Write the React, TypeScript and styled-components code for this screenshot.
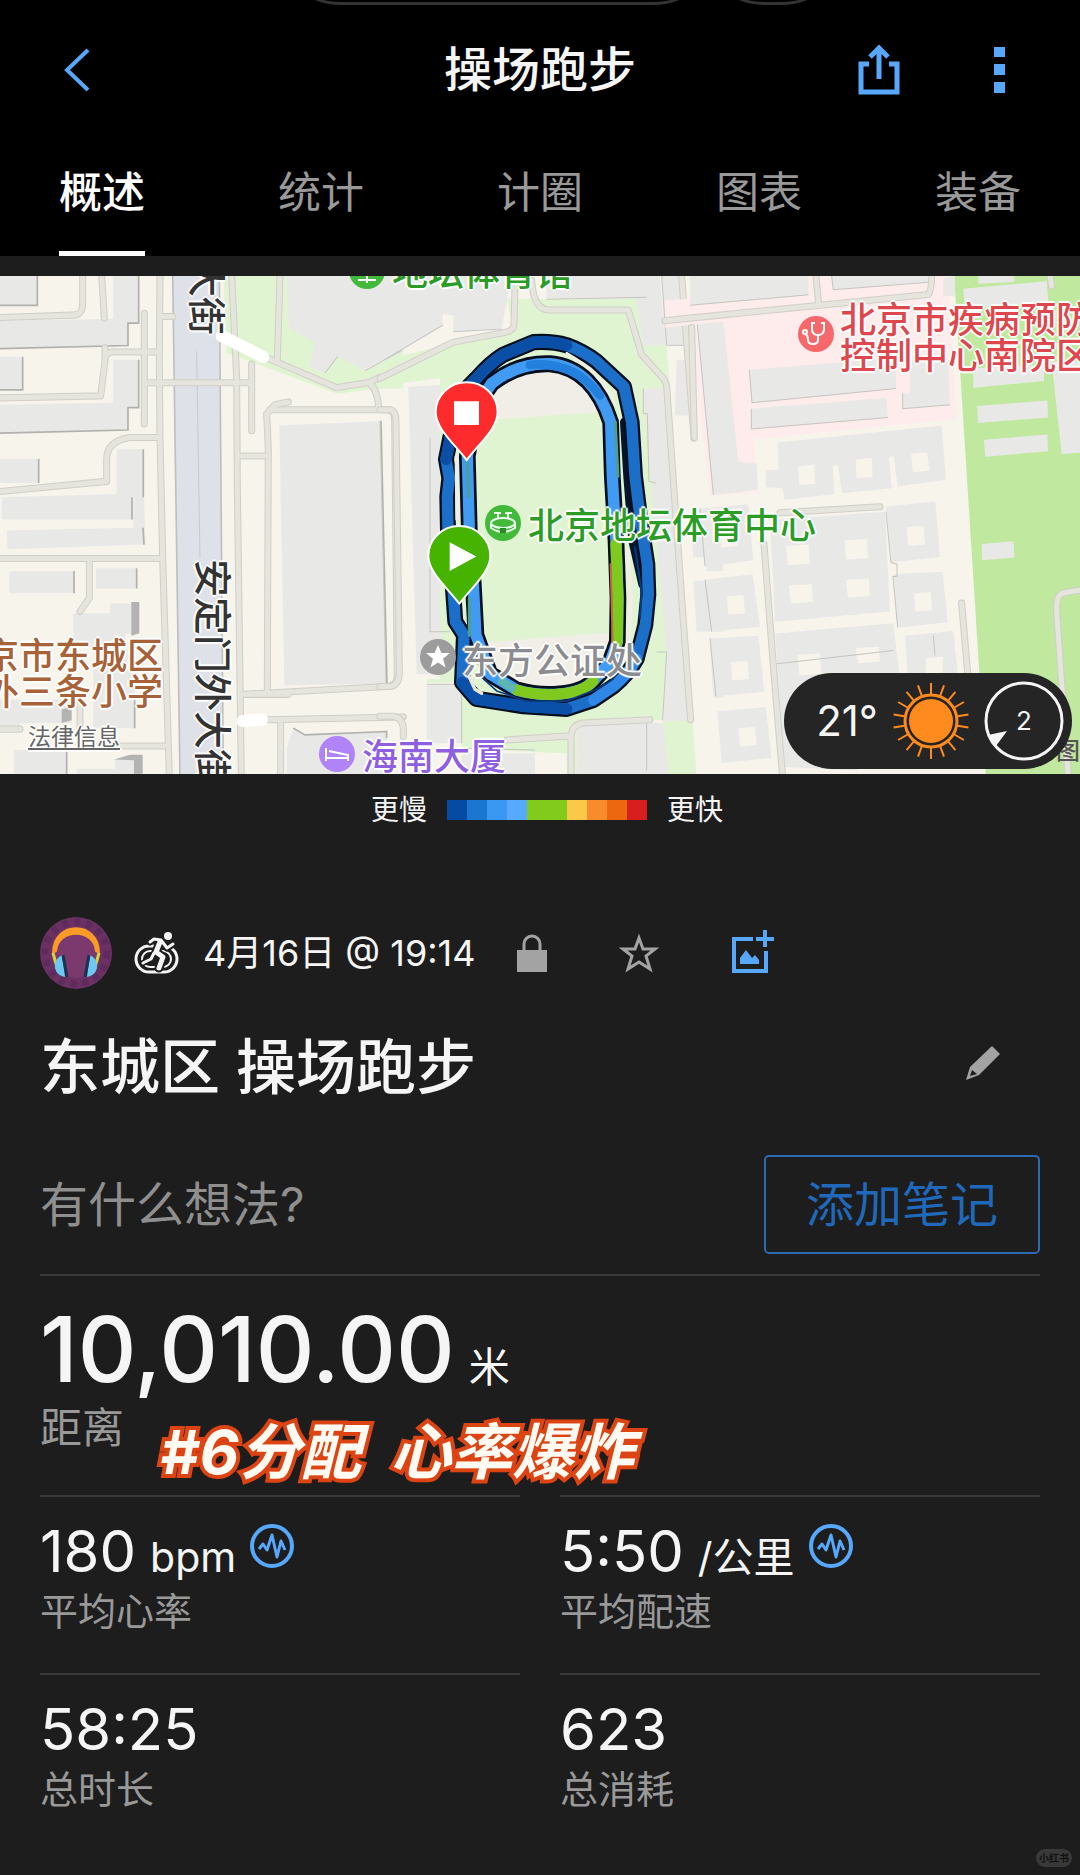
import React from "react";
import styled, { createGlobalStyle, css } from "styled-components";

const GlobalStyle = createGlobalStyle`
  *, *::before, *::after { box-sizing: border-box; }
  body {
    margin: 0;
    background: #1d1d1d;
    color: #f5f5f5;
    font-family: Inter, "Noto Sans CJK SC", sans-serif;
  }
  button { font: inherit; color: inherit; background: none; border: 0; padding: 0; cursor: pointer; }
  p, h1, h2, dl, dt, dd { margin: 0; font-weight: 400; }
  svg { display: block; }
`;

const blue = "#57a7fb";
const grey = "#a3a3a3";

/* ---------- page ---------- */

const Page = styled.div`
  position: relative;
  min-height: 100vh;
  overflow: hidden;
`;

const TopBar = styled.header`
  position: relative;
  background: #000;
`;

const StatusShapes = styled.div`
  position: absolute;
  top: 0;
  left: 0;
  right: 0;
  display: flex;
  justify-content: center;
  gap: 40px;
  padding-left: 42px;
  height: 6px;
  overflow: hidden;
`;

const StatusShape = styled.span<{ $width: number }>`
  width: ${(p) => p.$width}px;
  height: 72px;
  margin-top: -67px;
  border: 3px solid #333;
  border-radius: 36px / 16px;
`;

const NavRow = styled.div`
  display: grid;
  grid-template-columns: 1fr auto 1fr;
  align-items: center;
  height: 140px;
  padding: 0 60px;
`;

const PageTitle = styled.h1`
  font-size: 48px;
  line-height: 60px;
  font-weight: 500;
`;

const NavActions = styled.div`
  display: flex;
  justify-content: flex-end;
  gap: 94px;
`;

const IconButton = styled.button`
  display: grid;
  place-items: center;
  flex: none;
`;

const BackButton = styled(IconButton)`
  justify-self: start;
`;

const Tabs = styled.nav`
  display: flex;
  justify-content: space-between;
  padding: 0 59px;
`;

const Tab = styled.button<{ $active?: boolean }>`
  height: 116px;
  padding-bottom: 7px;
  border-bottom: 5px solid ${(p) => (p.$active ? "#fff" : "transparent")};
  color: ${(p) => (p.$active ? "#fff" : "#999")};
  font-size: 43px;
  line-height: 56px;
  font-weight: ${(p) => (p.$active ? 500 : 400)};
`;

/* ---------- map ---------- */

const MapPanel = styled.section`
  position: relative;
  height: 498px;
  margin-top: 20px;
  overflow: hidden;
  background: #f7f4ec;
`;

const MapDrawing = styled.svg`
  width: 100%;
  height: 100%;
`;

const PinLayer = styled(MapDrawing)`
  position: absolute;
  inset: 0;
`;

type Spot = { $x: number; $y: number };

const spot = css<Spot>`
  position: absolute;
  left: calc(50% + ${(p) => p.$x - 540}px);
  top: ${(p) => p.$y}px;
`;

const halo = css`
  text-shadow: 0 0 2px #fff, 2px 0 1px #fff, -2px 0 1px #fff, 0 2px 1px #fff, 0 -2px 1px #fff;
`;

const MapLabel = styled.span<Spot & { $color: string }>`
  ${spot}
  ${halo}
  color: ${(p) => p.$color};
  font-size: 36px;
  line-height: 36px;
  font-weight: 500;
  white-space: pre;
`;

const StreetLabel = styled.span<Spot>`
  ${spot}
  ${halo}
  color: #333;
  font-size: 38px;
  line-height: 38px;
  font-weight: 500;
  writing-mode: vertical-rl;
  text-orientation: sideways;
  white-space: nowrap;
`;

const LegalLink = styled.a<Spot>`
  ${spot}
  ${halo}
  color: #666;
  font-size: 23px;
  line-height: 28px;
  text-underline-offset: 3px;
`;

const Attribution = styled.span<Spot>`
  ${spot}
  color: #555;
  font-size: 24px;
  line-height: 28px;
  font-weight: 500;
  white-space: nowrap;
`;

const Weather = styled.div`
  position: absolute;
  right: 8px;
  bottom: 5px;
  display: flex;
  align-items: center;
  justify-content: flex-end;
  gap: 14px;
  width: 288px;
  height: 96px;
  padding-right: 8px;
  border-radius: 48px;
  background: #252525;
`;

const Temperature = styled.span`
  font-size: 42px;
  line-height: 48px;
`;

const Wind = styled.span`
  position: relative;
  display: grid;
  place-items: center;
  width: 80px;
  height: 80px;
  font-size: 26px;
  line-height: 32px;
`;

const WindDial = styled.svg`
  position: absolute;
  inset: 0;
`;

const Legend = styled.div`
  display: flex;
  align-items: center;
  justify-content: center;
  gap: 20px;
  height: 72px;
  padding-left: 14px;
  font-size: 28px;
  line-height: 36px;
`;

const Scale = styled.div`
  display: flex;
`;

const Swatch = styled.span<{ $color: string }>`
  width: 20px;
  height: 20px;
  background: ${(p) => p.$color};
`;

/* ---------- activity ---------- */

const Details = styled.main`
  padding: 70px 40px 0;
`;

const MetaRow = styled.div`
  display: flex;
  align-items: center;
  height: 74px;
`;

const ActivityMark = styled.span`
  margin: 0 24px 0 20px;
`;

const DateText = styled.time`
  font-size: 36px;
  line-height: 44px;
`;

const MetaActions = styled.div`
  display: flex;
  align-items: center;
  gap: 71px;
  margin-left: 42px;
`;

const TitleRow = styled.div`
  display: flex;
  align-items: center;
  justify-content: space-between;
  margin-top: 41px;
  padding-right: 40px;
`;

const ActivityTitle = styled.h2`
  font-size: 60px;
  line-height: 72px;
  font-weight: 500;
`;

const EditButton = styled(IconButton)`
  margin-bottom: 8px;
`;

const NoteRow = styled.div`
  display: flex;
  align-items: center;
  justify-content: space-between;
  margin-top: 52px;
  padding-bottom: 20px;
  border-bottom: 2px solid #3a3a3a;
`;

const NotePrompt = styled.p`
  color: #8f8f8f;
  font-size: 48px;
  line-height: 60px;
`;

const NoteButton = styled.button`
  height: 99px;
  padding: 0 40px;
  border: 2px solid #2c6bb3;
  border-radius: 5px;
  color: #2068ba;
  font-size: 48px;
  line-height: 60px;
`;

const Distance = styled.dl`
  position: relative;
  display: flex;
  flex-direction: column-reverse;
  padding: 25px 0 43px;
`;

const DistanceLabel = styled.dt`
  margin-top: 7px;
  color: #999;
  font-size: 42px;
  line-height: 48px;
`;

const DistanceValue = styled.dd`
  display: flex;
  align-items: baseline;
  gap: 14px;
  font-size: 91px;
  line-height: 96px;
  font-weight: 500;
`;

const Unit = styled.span`
  font-size: 41px;
  line-height: 48px;
  font-weight: 400;
`;

const Sticker = styled.dd`
  position: absolute;
  left: 120px;
  top: 138px;
  color: #fffaf2;
  font-size: 61px;
  line-height: 76px;
  font-weight: 700;
  font-style: italic;
  white-space: pre;
  -webkit-text-stroke: 8px #dd4413;
  paint-order: stroke fill;
  text-shadow: 2px 3px 0 #dd4413;
`;

const Metrics = styled.dl`
  display: grid;
  grid-template-columns: 1fr 1fr;
  column-gap: 40px;
`;

const Metric = styled.div`
  display: flex;
  flex-direction: column-reverse;
  justify-content: flex-end;
  padding: 18px 0 40px;
  border-top: 2px solid #3a3a3a;
`;

const MetricLabel = styled.dt`
  margin-top: 2px;
  color: #999;
  font-size: 38px;
  line-height: 44px;
`;

const MetricValue = styled.dd`
  display: flex;
  align-items: baseline;
  gap: 14px;
  font-size: 58px;
  line-height: 72px;
`;

const ZoneButton = styled(IconButton)`
  align-self: flex-start;
  margin-top: 9px;
`;

const Watermark = styled.span`
  position: absolute;
  right: 8px;
  bottom: 8px;
  padding: 0 3px;
  border-radius: 9px;
  background: #393939;
  color: #111;
  font-size: 10px;
  line-height: 18px;
  font-weight: 700;
`;

/* ---------- map artwork ---------- */

const Roads = ({ paths, width = 18 }: { paths: string[]; width?: number }) => (
  <g fill="none" strokeLinecap="round" strokeLinejoin="round">
    {paths.map((d) => (
      <path key={d} d={d} stroke="#cfcfc8" strokeWidth={width + 3} />
    ))}
    {paths.map((d) => (
      <path key={d} d={d} stroke="#e5e5de" strokeWidth={width - 3} />
    ))}
  </g>
);

const block = "#e8e9e7";
const lawn = "#e1f4d1";

const WestBlocks = () => (
  <g transform="translate(0 260) scale(.3333 .338)">
    <path d="M670 40h540v340l-60 0-140 15L680 275Z" fill={lawn} />
    <path d="M860 40h350v230l-115 58-80-43-40 50-48-18 18-72-78-45Z" fill={block} />
    <path d="M1095 328l110-60M975 335l38-50" stroke="#c5c5c0" strokeWidth="3" fill="none" />
    <g fill={block}>
      <path d="M0 47h112v87H0ZM340 47h76v140h-32v66L0 262v-82l340-6ZM0 286h68v98H0ZM340 295h76v142h-32v66L0 512v-84l340-6ZM0 588h116v72H0ZM350 560h80v142h-32v66H5v-66l345-10ZM20 800l380-8v-90h32l5 140-415 14ZM28 920h196v66H28ZM288 912h122v60H288ZM220 1046h110v-30h86v90h-40v40H220ZM280 1150h124v235H280ZM0 1300h215v70H60v20H0ZM42 1450h158v80H42ZM230 1505h115v-25l45-15h38v60H230Z" />
      <path d="M838 490l305-14 18 778-308 4Z" />
      <path d="M880 1385l35 20 245-10v130H860v-80Z" />
    </g>
    <g stroke="#b0b0ac" strokeWidth="5" fill="none">
      <path d="M416 47v140h-32v66L0 262M112 47v87H0M68 286v98H0M416 295v142h-32v66L0 512M116 588v72M430 560v142M396 702v66M432 842l-3-50M222 920v66M410 912v60M404 1290v95M200 1450v70M1143 476l18 778M880 1385l35 20 245-10v20" />
    </g>
    <path d="M394 1012h24v92l-24 8ZM185 1330l30-8v40l-30 8ZM342 1478l48-14h38v56h-26v-40Z" fill="#b3b4b2" />
    <path d="M518 40h140l12 1490H540Z" fill="#dfe1e8" stroke="#bfbfbd" strokeWidth="5" />
    <path d="M590 270l10 610" stroke="#c7c9d0" strokeWidth="3" />
    <Roads
      paths={[
        "M480 47L478 300 480 520 488 880 508 1530",
        "M248 47V130Q248 165 215 163L0 170",
        "M305 47l8 125",
        "M433 158V485",
        "M478 272H345Q315 270 315 300L302 402 0 408",
        "M315 260V290",
        "M440 363H750",
        "M755 308V505",
        "M478 525H390Q320 535 320 590V655L0 685",
        "M0 883H488",
        "M268 885V1000L240 1040",
        "M695 47l15 300 2 320 12 860",
        "M480 167h38",
        "M840 47l-8 250",
        "M790 285L1010 378 1110 362 1210 310",
        "M1110 365Q1135 390 1136 438",
        "M865 420L825 428 800 455 805 560 802 1270",
        "M810 443H1160Q1184 443 1184 470L1192 1230Q1192 1262 1160 1262L730 1285H865",
        "M720 580h80",
        "M800 1360L1210 1352M842 1362V1530",
        "M0 1388h60M240 1310V1430M235 1438H500",
      ]}
    />
    <g stroke="#fff" strokeWidth="36" strokeLinecap="round">
      <path d="M665 225L790 287" />
      <path d="M728 1364L786 1360" />
    </g>
  </g>
);

const EastBlocks = () => (
  <g transform="translate(690 260) scale(.3333 .338)">
    <path d="M-75 120L0 115V47H775L800 470 190 530 205 690 70 697 20 190-75 200Z" fill="#fdeceb" />
    <path d="M792 40h390v1490H888Z" fill="#c0e89e" />
    <g fill={block}>
      <path d="M0 47h355v56L0 134ZM425 47h290v18L430 88ZM22 190l78-8 45 415 55 5 4 78-134 15ZM178 325l440-35v90l-432 42ZM184 440l405-32 5 58-410 34ZM660 300l115-10 5 138-142 12v-45h22ZM262 540L755 490l13 160-145 20-12-90-15 3 10 92-150 15-12-85-16 5 5 82-150 18-5-35-50-3v-50l38-2ZM760 55l35-8v60h-35ZM865 47h108v18l-108 5ZM820 85l250-22 5 60-250 20ZM850 320l212-10v48l-212 20ZM862 432l210-16 2 50-210 16ZM882 532l190-16 2 50-188 16ZM1085 300h95v270l-65 4ZM875 840l96-8 2 48-96 8Z" />
      <path d="M30 735l145-12 15 165-145 20ZM48 945l140-15 22 155-145 14ZM60 1120l145-8 18 165-145 14ZM82 1335l145-12 18 150-150 15ZM240 770l345-25 15 295-345 30ZM588 730l148-16 14 165-145 15ZM608 930l150-8 15 150-150 16ZM255 1105l355-30 20 165-130 270-215-10ZM645 1112l145-14 15 140-150 20Z" />
    </g>
    <g fill="#f7f4ec">
      <path d="M325 610l48-4 3 56-48 4ZM497 590l48-4 3 56-48 4ZM663 573l48-4 8 54-50 6ZM90 800l50-4 3 50-50 4ZM288 846l68-4 4 56-66 5ZM463 830l68-4 4 56-66 5ZM297 963l68-4 4 52-66 5ZM468 946l68-4 4 52-66 5ZM650 790l50-4 5 56-50 4ZM672 986l50-4 5 54-50 4ZM110 995l50-4 5 54-50 4ZM122 1190l50-4 5 54-50 4ZM145 1385l50-4 5 54-50 4ZM322 1168l68-4 4 60-66 5ZM498 1148l68-4 4 44-66 5ZM708 1178l50-4v50h-50Z" />
    </g>
    <g fill="none" stroke="#c4c4c0" strokeWidth="3">
      <path d="M355 103L0 134M425 47l5 41 285-22M22 190l48 505M178 325l8 97 432-42M184 440v60l410-34M638 395v45l142-12M588 745l15 150 18 5v35l-12 2 14 150M45 945l20 154M60 1120l18 171M255 1195L610 1155M730 1110l5 60M30 735l15 170" />
    </g>
    <Roads
      paths={[
        "M-75 180L0 172 715 102Q725 90 725 47",
        "M378 47l8 85",
        "M5 200l8 325",
        "M270 748L570 730",
        "M222 840L250 1200 278 1530",
        "M815 1015l20 230",
        "M1180 975L1120 985Q1098 990 1100 1040L1135 1530",
        "M1080 47l5 30",
      ]}
    />
  </g>
);

const Park = () => (
  <g transform="translate(380 260) scale(.3333 .338)">
    <path d="M380 115H775L790 250 860 380H800L810 650 830 780 860 1160H835L848 1360 610 1370V1530H560V1460L245 1445V1250H140V1240H180V350L0 372V300L400 200Z" fill={lawn} />
    <path d="M790 250h70L950 1530H610V1370H848L800 650Z" fill={lawn} />
    <g fill={block}>
      <path d="M0 47h395l-30 155-145 10v-48l-32-4v33L0 303ZM500 47h340l15 205h-65L770 115H500ZM85 375l95-5v725l20 130H110ZM140 1255h105v175H140ZM788 380h80l35 620 30 365h-85l12-200ZM845 47h65l10 205h-65ZM890 295h40l-5 165h-40ZM590 1370h260l15 150H590ZM245 1460h220v70H245Z" />
      <path d="M925 180l95-8v520h-20ZM930 740h100v180h-50v-40h-40ZM940 950h90v150h-80ZM990 1135h40v160h-30Z" />
    </g>
    <path d="M300 500Q310 300 510 300 670 330 700 480V1160Q650 1290 500 1290 340 1270 300 1120Z" fill="#f0eee7" />
    <path d="M292 475l395-27v655l-395 30Z" fill={lawn} />
    <g stroke="#c5c5c0" strokeWidth="3" fill="none">
      <path d="M188 193L0 303M220 212l145-8M500 116l300-6M845 47l15 205h55M790 380v75h12l5 200 20 5M150 525v575h60M0 475l18 780M140 1255h105v175M848 1360l12-200h-30M245 1445l220 5M800 1370v140" />
    </g>
    <path d="M920 138l100-8v35l-95 5ZM928 185l24-2 50 512h-12Z" fill="#fdeceb" />
    <Roads
      paths={[
        "M405 80L402 190Q402 210 370 215L220 243 0 350",
        "M455 60Q460 145 505 148H745L785 280 850 350Q862 365 862 400L905 1000 932 1360",
        "M905 47l10 130 27 350",
        "M0 443H30Q48 445 48 480L58 1220Q58 1262 25 1262L0 1262",
        "M0 1350H40Q70 1355 70 1390V1410",
        "M810 1360L610 1370Q575 1375 573 1410V1530M380 1420L570 1408",
      ]}
    />
  </g>
);

const outerLoop =
  "M218 960L204 800 202 700 208 645 198 590 210 530 240 400 290 350Q330 305 370 280L460 243Q520 240 560 252 610 270 650 300L732 375 755 480 765 640 780 760 802 900 805 990 796 1080 770 1180Q745 1225 700 1262L640 1302 560 1328 430 1320 288 1298 246 1250 252 1110 226 1070Z";
const innerLoop =
  "M268 800L262 580 290 430 335 365C400 315 460 305 510 307C600 315 660 380 692 480L697 640 708 830 714 1000 712 1130 690 1190 640 1245C600 1290 490 1295 410 1272L330 1225 288 1110 280 960Z";

const RunTrack = () => (
  <g transform="translate(380 260) scale(.3333 .338)" fill="none" strokeLinejoin="round" strokeLinecap="round">
    <path d="M735 480L745 640 760 830 790 960" stroke="#06152b" strokeWidth="30" />
    <path d={outerLoop} stroke="#04101f" strokeWidth="48" />
    <path d={innerLoop} stroke="#04101f" strokeWidth="50" />
    <path d={outerLoop} stroke="#1c6fc9" strokeWidth="34" />
    <path d="M198 590L210 530 240 400 290 350Q330 305 370 280L460 243Q520 240 560 252" stroke="#0b4ea6" strokeWidth="34" />
    <path d="M560 1328L430 1320 288 1298 246 1250" stroke="#0b50a8" strokeWidth="34" />
    <path d="M770 1180Q745 1225 700 1262L640 1302" stroke="#3088e6" strokeWidth="32" />
    <path d="M765 850L785 980 780 1060" stroke="#073a80" strokeWidth="6" />
    <path d={innerLoop} stroke="#429bf2" strokeWidth="34" />
    <path d="M450 310C560 300 620 350 660 400" stroke="#2480dd" strokeWidth="26" />
    <path d="M262 600l4 100M268 1000v110M706 480l8 160" stroke="#4d9f93" strokeWidth="9" />
    <path d="M708 840L714 1000 712 1130" stroke="#80c91f" strokeWidth="34" />
    <path d="M692 900l6 230" stroke="#c56a3a" strokeWidth="6" />
    <path d="M640 1245C600 1290 490 1295 410 1272" stroke="#80c91f" strokeWidth="32" />
    <path d="M396 1266l-30-20" stroke="#5eb6b0" strokeWidth="24" />
    <path d="M300 1230L350 1275 440 1305 560 1305 650 1270 700 1240" stroke="#0a3c80" strokeWidth="5" />
    <path d="M268 1235L285 1270 305 1282" stroke="#e8e6df" strokeWidth="10" />
    <path d="M230 580L232 770" stroke="#f0eee7" strokeWidth="12" strokeLinecap="butt" />
    <path d="M560 275Q660 330 705 425" stroke="#f0eee7" strokeWidth="7" />
    <path d="M742 860L752 1000 745 1130" stroke="#f0eee7" strokeWidth="14" />
  </g>
);

const Pins = () => (
  <g transform="translate(380 260) scale(.3333 .338)">
    <g stroke="#fff" strokeWidth="6" strokeLinejoin="round">
      <path d="M260 592C225 545 167 500 167 450A93 88 0 0 1 353 450C353 500 295 545 260 592Z" fill="#fd2b2c" />
      <path d="M238 1017C203 970 145 925 145 875A93 88 0 0 1 331 875C331 925 273 970 238 1017Z" fill="#46b300" />
    </g>
    <path d="M222 418h75v70h-75ZM209 835l80 42-80 43Z" fill="#fff" />
  </g>
);

const Star = ({ cx, cy }: { cx: number; cy: number }) => (
  <path
    transform={`translate(${cx} ${cy})`}
    d="M0-12L3.4-4H12L5 1.8 7.6 10.5 0 5.4-7.6 10.5-5 1.8-12-4H-3.4Z"
    fill="#fff"
  />
);

const PoiBadges = () => (
  <g>
    <circle cx="367" cy="271" r="18" fill="#43b93c" />
    <path d="M358 280h18M367 265v18" stroke="#fff" strokeWidth="2" />
    <circle cx="503" cy="523" r="18" fill="#43b93c" />
    <g fill="none" stroke="#eaffea" strokeWidth="2">
      <ellipse cx="503" cy="523" rx="12" ry="5" />
      <path d="M491 523v5q12 8 24 0v-5M498 519v-6M508 519v-6M494 513h7M505 513h7" />
    </g>
    <path d="M500 528h6v5h-6Z" fill="#2a8a25" />
    <circle cx="438" cy="657" r="18" fill="#9c9c9c" />
    <Star cx={438} cy={657} />
    <circle cx="337" cy="754" r="18" fill="#b183f8" />
    <path d="M326 748v13M326 758h22v3M348 758v-3L329 751" stroke="#fff" strokeWidth="2" fill="none" />
    <circle cx="816" cy="334" r="18" fill="#f7686b" />
    <g fill="none" stroke="#fff" strokeWidth="2">
      <path d="M815 323h-3v6q0 6 6 6t6-6v-6h-3M818 335v5q0 4-5 4t-5-4q0-5-3-6" />
      <circle cx="805" cy="332" r="2" />
    </g>
  </g>
);

const MapArt = () => (
  <MapDrawing viewBox="0 276 1080 498" preserveAspectRatio="xMidYMid slice" aria-hidden="true">
    <rect x="0" y="276" width="1080" height="498" fill="#f7f4ec" />
    <WestBlocks />
    <Park />
    <EastBlocks />
    <RunTrack />
  </MapDrawing>
);

/* ---------- icons ---------- */

const BackIcon = () => (
  <svg width="34" height="46" viewBox="0 0 34 46" fill="none" stroke={blue} strokeWidth="4">
    <path d="M28 3L7 23 28 43" />
  </svg>
);

const ShareIcon = () => (
  <svg width="42" height="54" viewBox="0 0 42 54" fill="none" stroke={blue} strokeWidth="5">
    <path d="M11 21H3v28h36V21h-8M21 36V5M12 14l9-9 9 9" />
  </svg>
);

const MoreIcon = () => (
  <svg width="26" height="46" viewBox="0 0 26 46" fill={blue}>
    <path d="M0 0h11v10H0ZM0 17h11v11H0ZM0 35h11v11H0Z" />
  </svg>
);

const SunIcon = () => (
  <svg width="78" height="78" viewBox="-39 -39 78 78" fill="none" stroke="#ff8a1e">
    <circle r="22" fill="#ff8a1e" stroke="none" />
    <circle r="26" strokeWidth="3" />
    {Array.from({ length: 18 }, (_, i) => (
      <path key={i} d="M0-27V-38" strokeWidth="2" transform={`rotate(${i * 20})`} />
    ))}
  </svg>
);

const Avatar = () => (
  <svg width="74" height="74" viewBox="0 0 74 74" role="img" aria-label="头像">
    <circle cx="36" cy="37" r="36" fill="#6b3163" />
    <circle cx="36" cy="37" r="31" fill="none" stroke="#5f2b5d" strokeWidth="7" strokeDasharray="6 6" />
    <circle cx="36" cy="38" r="24" fill="#7b396e" />
    <path d="M13 37C13 4 59 4 59 37L56 35C54 12 18 12 16 35Z" fill="#fb9b27" stroke="#fb9b27" strokeWidth="2" />
    <path d="M13 37l4 14M59 37l-4 14" stroke="#d3d33c" strokeWidth="3" />
    <path d="M22 39Q14 43 15 52 17 60 25 61ZM50 39Q58 43 57 52 55 60 47 61Z" fill="#6cc9f2" />
    <path d="M23 39l4 22M49 39l-4 22" stroke="#1d3150" strokeWidth="3" />
  </svg>
);

const RunIcon = () => (
  <svg width="45" height="42" viewBox="0 0 45 42" fill="none" stroke="#f5f5f5" strokeLinecap="round" strokeLinejoin="round">
    <rect x="2" y="14" width="41" height="26" rx="13" strokeWidth="3" />
    <rect x="8" y="19" width="29" height="16" rx="8" strokeWidth="2" />
    <g stroke="#1d1d1d">
      <path d="M16 10L20 7 27 8 33 16 39 12" strokeWidth="7" />
      <path d="M26 10L22 20 29 25 25 36" strokeWidth="9" />
      <path d="M20 21L17 27 9 31" strokeWidth="6" />
    </g>
    <circle cx="34" cy="4" r="4" fill="#f5f5f5" stroke="none" />
    <path d="M16 10L20 7 27 8 33 16 39 12" strokeWidth="3" />
    <path d="M26 10L22 20 29 25 25 36" strokeWidth="5" />
    <path d="M20 21L17 27 9 31" strokeWidth="3" />
  </svg>
);

const LockIcon = () => (
  <svg width="30" height="38" viewBox="0 0 30 38">
    <path d="M7 19V10A8 8 0 0 1 23 10V19" fill="none" stroke={grey} strokeWidth="3" />
    <path d="M0 16h30v22H0Z" fill={grey} />
  </svg>
);

const StarIcon = () => (
  <svg width="42" height="40" viewBox="0 0 42 40" fill="none" stroke={grey} strokeWidth="3">
    <path d="M21 5L25 16H37L28 23 32 36 21 29 10 36 14 23 5 16H17Z" />
  </svg>
);

const AddImageIcon = () => (
  <svg width="43" height="47" viewBox="0 0 43 47">
    <path d="M22 9H3V41H35V21M34 0V17M25 9H43" fill="none" stroke={blue} strokeWidth="4" />
    <path d="M9 34V28L15 20 21 28 24 25 28 30V34Z" fill={blue} />
  </svg>
);

const PencilIcon = () => (
  <svg width="34" height="34" viewBox="0 0 34 34">
    <path fillRule="evenodd" d="M26 0L34 8 13 29 0 34 4 21ZM6 24L4 30 11 28Z" fill={grey} />
  </svg>
);

const ZoneIcon = () => (
  <svg width="45" height="45" viewBox="0 0 45 45" fill="none" stroke={blue}>
    <circle cx="22" cy="22" r="20" strokeWidth="4" />
    <path d="M9 25l4-5 4 6 5-15 5 22 4-16 4 9" strokeWidth="3" strokeLinejoin="round" />
  </svg>
);

/* ---------- content ---------- */

const tabs = ["概述", "统计", "计圈", "图表", "装备"];
const paceColors = [
  "#064ba3", "#1b76cf", "#3b98f2", "#55a9ff", "#82ca1c",
  "#82ca1c", "#fbc94a", "#f88b2b", "#ec670f", "#d71f1f",
];
const metrics = [
  { label: "平均心率", value: "180", unit: "bpm", zones: true },
  { label: "平均配速", value: "5:50", unit: "/公里", zones: true },
  { label: "总时长", value: "58:25" },
  { label: "总消耗", value: "623" },
];

export default function App() {
  return (
    <Page>
      <GlobalStyle />
      <TopBar>
        <StatusShapes>
          <StatusShape $width={384} />
          <StatusShape $width={88} />
        </StatusShapes>
        <NavRow>
          <BackButton aria-label="返回"><BackIcon /></BackButton>
          <PageTitle>操场跑步</PageTitle>
          <NavActions>
            <IconButton aria-label="分享"><ShareIcon /></IconButton>
            <IconButton aria-label="更多"><MoreIcon /></IconButton>
          </NavActions>
        </NavRow>
        <Tabs>
          {tabs.map((name, i) => (
            <Tab key={name} $active={i === 0} aria-current={i === 0 ? "page" : undefined}>
              {name}
            </Tab>
          ))}
        </Tabs>
      </TopBar>

      <MapPanel aria-label="路线地图">
        <MapArt />
        <StreetLabel $x={188} $y={-17}>大街</StreetLabel>
        <StreetLabel $x={194} $y={283}>安定门外大街</StreetLabel>
        <MapLabel $x={392} $y={-21} $color="#2b9c25">地坛体育馆</MapLabel>
        <MapLabel $x={528} $y={232} $color="#2b9c25">北京地坛体育中心</MapLabel>
        <MapLabel $x={462} $y={367} $color="#8c8c90">东方公证处</MapLabel>
        <MapLabel $x={362} $y={463} $color="#8f5fe2">海南大厦</MapLabel>
        <MapLabel $x={840} $y={26} $color="#dd474d">{"北京市疾病预防\n控制中心南院区"}</MapLabel>
        <MapLabel $x={-17} $y={362} $color="#a76238">{"京市东城区\n外三条小学"}</MapLabel>
        <LegalLink href="#legal" $x={28} $y={447}>法律信息</LegalLink>
        <Attribution $x={1056} $y={461}>图</Attribution>
        <PinLayer viewBox="0 276 1080 498" preserveAspectRatio="xMidYMid slice" aria-hidden="true">
          <PoiBadges />
          <Pins />
        </PinLayer>
        <Weather>
          <Temperature>21°</Temperature>
          <SunIcon />
          <Wind>
            <WindDial viewBox="0 0 80 80" fill="none">
              <circle cx="40" cy="40" r="38" stroke="#f5f5f5" strokeWidth="3" />
              <path d="M4 54L23 50 12 65Z" fill="#f5f5f5" />
            </WindDial>
            2
          </Wind>
        </Weather>
      </MapPanel>

      <Legend>
        <span>更慢</span>
        <Scale>
          {paceColors.map((color, i) => (
            <Swatch key={i} $color={color} />
          ))}
        </Scale>
        <span>更快</span>
      </Legend>

      <Details>
        <MetaRow>
          <Avatar />
          <ActivityMark><RunIcon /></ActivityMark>
          <DateText>4月16日 @ 19:14</DateText>
          <MetaActions>
            <IconButton aria-label="隐私"><LockIcon /></IconButton>
            <IconButton aria-label="收藏"><StarIcon /></IconButton>
            <IconButton aria-label="添加照片"><AddImageIcon /></IconButton>
          </MetaActions>
        </MetaRow>

        <TitleRow>
          <ActivityTitle>东城区 操场跑步</ActivityTitle>
          <EditButton aria-label="编辑标题"><PencilIcon /></EditButton>
        </TitleRow>

        <NoteRow>
          <NotePrompt>有什么想法?</NotePrompt>
          <NoteButton>添加笔记</NoteButton>
        </NoteRow>

        <Distance>
          <DistanceLabel>距离</DistanceLabel>
          <DistanceValue>
            10,010.00<Unit>米</Unit>
          </DistanceValue>
          <Sticker>{"#6分配  心率爆炸"}</Sticker>
        </Distance>

        <Metrics>
          {metrics.map((m) => (
            <Metric key={m.label}>
              <MetricLabel>{m.label}</MetricLabel>
              <MetricValue>
                {m.value}
                {m.unit && <Unit>{m.unit}</Unit>}
                {m.zones && (
                  <ZoneButton aria-label={`${m.label}区间`}><ZoneIcon /></ZoneButton>
                )}
              </MetricValue>
            </Metric>
          ))}
        </Metrics>
      </Details>
      <Watermark>小红书</Watermark>
    </Page>
  );
}
